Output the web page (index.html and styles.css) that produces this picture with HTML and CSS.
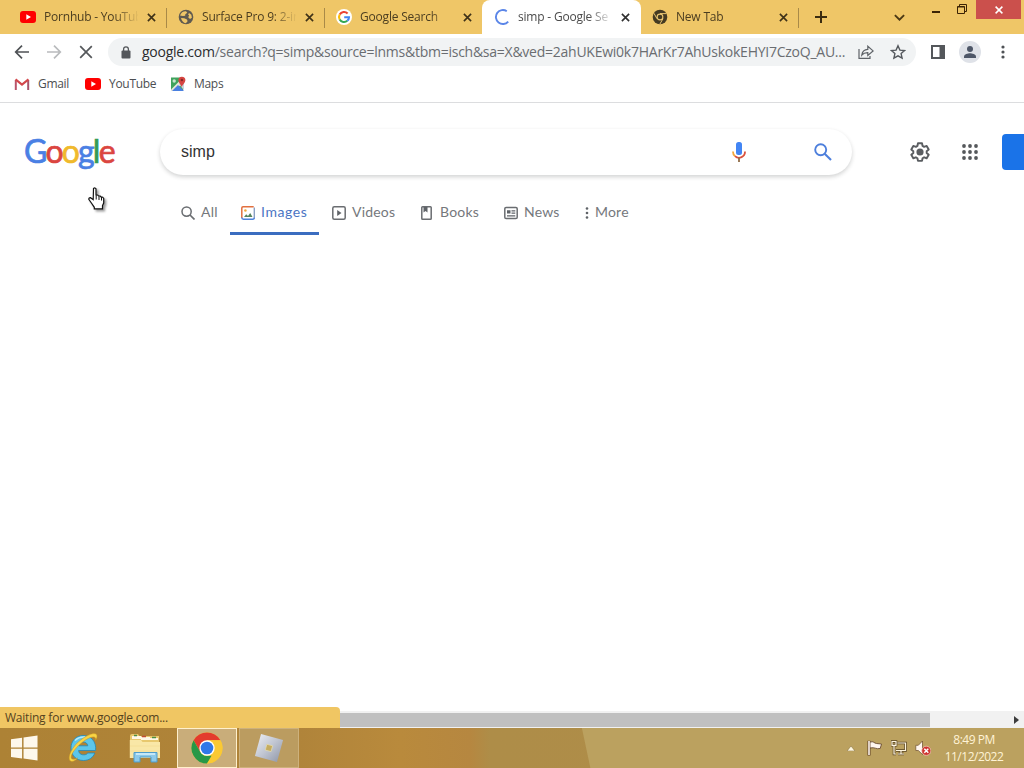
FILE: index.html
```
<!DOCTYPE html>
<html lang="en">
<head>
    <meta charset="UTF-8">
    <meta name="viewport" content="width=device-width, initial-scale=1.0">
    <title>simp - Google Search</title>
    <link rel="stylesheet" href="styles.css">
</head>
<body>
    <svg class="defs" aria-hidden="true">
        <symbol id="i-close" viewBox="0 0 10 10"><path d="M1 1l8 8M9 1l-8 8" fill="none" stroke="currentColor" stroke-width="1.8"/></symbol>
        <symbol id="i-youtube" viewBox="0 0 16 12"><rect width="16" height="12" rx="3" fill="#f00"/><path d="M6.3 3.3v5.4L11 6z" fill="#fff"/></symbol>
    </svg>

    <div class="tab-strip">
        <div class="tab">
            <svg class="favicon" viewBox="0 0 16 16"><use href="#i-youtube" y="2" width="16" height="12"/></svg>
            <span class="tab-title">Pornhub - YouTub</span>
            <svg class="tab-close"><use href="#i-close"/></svg>
        </div>
        <div class="tab">
            <svg class="favicon" viewBox="0 0 16 16"><circle cx="8" cy="8" r="7.3" fill="#5f5a50"/><path d="M2 6.5C3 3.5 5.500 2 8 2.200L9.300 3.700 7.300 5.200 7.200 6.800 5 7zM3 9l3.200.2 2.800 1.300.6 1.800L7.800 14.300C5.500 13.800 3.600 12 3 9zM11 4l2.300 1.800.6 3-1.900 1.100-1.800-1.600.9-1.700-1-1.200z" fill="#efc667"/></svg>
            <span class="tab-title">Surface Pro 9: 2-in</span>
            <svg class="tab-close"><use href="#i-close"/></svg>
        </div>
        <div class="tab no-line">
            <svg class="favicon" viewBox="0 0 16 16"><circle cx="8" cy="8" r="8" fill="#fff"/><g fill="none" stroke-width="2.1"><path d="M11.6 4.4A5 5 0 0 0 3.7 5.5" stroke="#ea4335"/><path d="M3.7 5.5a5 5 0 0 0 0 5" stroke="#fbbc05"/><path d="M3.7 10.5a5 5 0 0 0 7.600 1.3" stroke="#34a853"/><path d="M11.3 11.8A5 5 0 0 0 13 8.2H8.2" stroke="#4285f4"/></g></svg>
            <span class="tab-title">Google Search</span>
            <svg class="tab-close"><use href="#i-close"/></svg>
        </div>
        <div class="tab active no-line">
            <svg class="favicon" viewBox="0 0 16 16"><path d="M14.200 12.600A7 7 0 1 1 12.800 2.200" fill="none" stroke="#5b86e8" stroke-width="1.900"/></svg>
            <span class="tab-title">simp - Google Se</span>
            <svg class="tab-close"><use href="#i-close"/></svg>
        </div>
        <div class="tab">
            <svg class="favicon" viewBox="0 0 16 16"><circle cx="8" cy="8" r="7.300" fill="#443a22"/><circle cx="8" cy="8" r="3.400" fill="#e9c571"/><circle cx="8" cy="8" r="2.300" fill="#443a22"/><path d="M8 4.600h6.400M5 9.700L1.900 4.200M11 9.700l-3.200 5.500" stroke="#e9c571" stroke-width="1"/></svg>
            <span class="tab-title">New Tab</span>
            <svg class="tab-close"><use href="#i-close"/></svg>
        </div>
        <svg class="new-tab" viewBox="0 0 12 12"><path d="M6 0v12M0 6h12" stroke="#3b2c10" stroke-width="2"/></svg>
        <svg class="tab-search" viewBox="0 0 10 6"><path d="M.8.8L5 5 9.200.8" fill="none" stroke="#4b3915" stroke-width="1.700"/></svg>
        <div class="window-buttons">
            <svg class="win-min" viewBox="0 0 8 2"><path d="M0 1h8" stroke="#3b2305" stroke-width="2"/></svg>
            <svg class="win-max" viewBox="0 0 10 10"><path d="M.5 2.500h7v7h-7zM2.500 2.500v-2h7v7h-2" fill="none" stroke="#3b2305" stroke-width="1"/><path d="M.5 3h7" stroke="#3b2305"/></svg>
            <span class="win-close"><svg viewBox="0 0 8 8"><path d="M.6.6l6.800 6.800M7.400.6L.6 7.400" stroke="#fff" stroke-width="1.500"/></svg></span>
        </div>
    </div>

    <div class="toolbar">
        <svg class="nav" viewBox="0 0 16 16"><path d="M15 8H2M8 1.700L1.700 8 8 14.300" fill="none" stroke="#4f5256" stroke-width="1.700"/></svg>
        <svg class="nav" viewBox="0 0 16 16"><path d="M1 8h13M8 1.700L14.300 8 8 14.300" fill="none" stroke="#b9bbbd" stroke-width="1.700"/></svg>
        <svg class="nav" viewBox="0 0 16 16"><path d="M2.200 2.200l11.600 11.600M13.800 2.200L2.200 13.800" fill="none" stroke="#55585b" stroke-width="1.700"/></svg>
        <div class="omnibox">
            <svg class="lock" viewBox="0 0 10 13"><rect x=".5" y="4.500" width="9" height="8" rx="1" fill="#54575b"/><path d="M2.600 5V3.200a2.400 2.400 0 0 1 4.800 0V5" fill="none" stroke="#54575b" stroke-width="1.300"/></svg>
            <span class="url"><b>google.com</b>/search?q=simp&amp;source=lnms&amp;tbm=isch&amp;sa=X&amp;ved=2ahUKEwi0k7HArKr7AhUskokEHYI7CzoQ_AU...</span>
            <svg class="share" viewBox="0 0 16 14"><path d="M1 4v9.300h11V11" fill="none" stroke="#5f6368" stroke-width="1.200"/><path d="M3.800 10c.5-3.700 2.600-5.600 6-5.700V1.200l5.300 4.700-5.300 4.600V7.600C7.300 7.500 5.300 8.300 3.800 10z" fill="none" stroke="#5f6368" stroke-width="1.200"/></svg>
            <svg class="star" viewBox="0 0 16 16"><path d="M8 1.800l1.900 4.300 4.700.4-3.500 3.100 1 4.600L8 11.800l-4.100 2.400 1-4.600L1.400 6.500l4.700-.4z" fill="none" stroke="#54585d" stroke-width="1.400"/></svg>
        </div>
        <svg class="panel" viewBox="0 0 14 14"><path d="M1 1h12v12H1z" fill="none" stroke="#54575b" stroke-width="2"/><path d="M8.500 1H13v12H8.500z" fill="#54575b"/></svg>
        <svg class="avatar" viewBox="0 0 22 22"><circle cx="11" cy="11" r="11" fill="#dfe2e8"/><circle cx="11" cy="7.900" r="3" fill="#4e5768"/><path d="M5 17v-1.600c0-2.200 4-3.200 6-3.200s6 1 6 3.200V17z" fill="#4e5768"/></svg>
        <svg class="menu" viewBox="0 0 4 14"><g fill="#4f5256"><circle cx="2" cy="2" r="1.600"/><circle cx="2" cy="7" r="1.600"/><circle cx="2" cy="12" r="1.600"/></g></svg>
    </div>

    <div class="bookmarks">
        <div class="bookmark b1">
            <svg viewBox="0 0 16 16"><path d="M1.800 14V4" stroke="#b9546a" stroke-width="2"/><path d="M14.200 14V4" stroke="#a8526a" stroke-width="2"/><path d="M1.500 3.400L8 8.500l6.500-5.100" fill="none" stroke="#d3474b" stroke-width="2.200"/></svg>
            <span>Gmail</span>
        </div>
        <div class="bookmark b2">
            <svg viewBox="0 0 16 16"><use href="#i-youtube" y="2" width="16" height="12"/></svg>
            <span>YouTube</span>
        </div>
        <div class="bookmark b3">
            <svg viewBox="0 0 16 16"><path d="M1 1.500h12v13H1z" fill="#3fa35c"/><path d="M1 13.500L12 2.500v5L4.500 15H1z" fill="#e8e6d8"/><path d="M2 15L8 9l6 6z" fill="#4a80e0"/><path d="M9 8l5-1v7.500z" fill="#c9d3dc"/><circle cx="4.200" cy="5" r="1.700" fill="#c9e6cf"/><path d="M11.700 11C11 8.500 8.400 6.800 8.400 4.200a3.500 3.500 0 0 1 7 0c0 2.600-3 4.300-3.700 6.800z" fill="#d64541"/><circle cx="11.900" cy="4" r="1.200" fill="#842a28"/></svg>
            <span>Maps</span>
        </div>
    </div>

    <main class="page">
        <header class="search-header">
            <div class="logo"><span class="blue">G</span><span class="red">o</span><span class="yellow">o</span><span class="blue">g</span><span class="green">l</span><span class="red">e</span></div>
            <div class="search-box">
                <span class="query">simp</span>
                <svg class="mic" viewBox="0 0 14 20"><rect x="4" y="0" width="6" height="13" rx="2.500" fill="#4285f4"/><path d="M1 9.500a6 6 0 0 0 2 4.700" fill="none" stroke="#f2a73b" stroke-width="1.800"/><path d="M3 14.200a6 6 0 0 0 10-4.700" fill="none" stroke="#d9523f" stroke-width="1.800"/><path d="M7 15.500V20" stroke="#8f6b45" stroke-width="1.800"/></svg>
                <svg class="lens" viewBox="0 0 18 18"><circle cx="6.700" cy="6.700" r="5.500" fill="none" stroke="#4d7fdc" stroke-width="1.900"/><path d="M10.700 10.700l6.300 6.300" stroke="#4d7fdc" stroke-width="2.100"/></svg>
            </div>
            <svg class="gear" viewBox="0 0 24 24"><path d="M9.800 2.500h4.400l.6 2.900 1.700 1 2.800-1 2.200 3.800-2.200 1.900v2l2.200 1.900-2.200 3.800-2.800-1-1.700 1-.6 2.900H9.800l-.6-2.900-1.700-1-2.800 1L2.500 15l2.200-1.900v-2L2.500 9.200l2.200-3.800 2.800 1 1.700-1z" fill="none" stroke="#5a5d61" stroke-width="2.100" stroke-linejoin="round"/><circle cx="12" cy="12" r="3.900" fill="#5a5d61"/></svg>
            <svg class="apps" viewBox="0 0 16 16"><g fill="#55585b"><circle cx="2" cy="2" r="1.900"/><circle cx="8" cy="2" r="1.900"/><circle cx="14" cy="2" r="1.900"/><circle cx="2" cy="8" r="1.900"/><circle cx="8" cy="8" r="1.900"/><circle cx="14" cy="8" r="1.900"/><circle cx="2" cy="14" r="1.900"/><circle cx="8" cy="14" r="1.900"/><circle cx="14" cy="14" r="1.900"/></g></svg>
            <div class="sign-in"></div>
        </header>

        <nav class="filters">
            <a class="filter f-all"><svg viewBox="0 0 14 14"><circle cx="5.600" cy="5.600" r="4.600" fill="none" stroke="#6a6d71" stroke-width="1.500"/><path d="M9 9l4.500 4.500" stroke="#6a6d71" stroke-width="1.700"/></svg><span>All</span></a>
            <a class="filter f-images"><svg viewBox="0 0 14 14"><path d="M13.300 1.500v11" stroke="#8ba0c4" stroke-width="1.400"/><path d="M12.700.8H2Q.8.8.8 2v10" fill="none" stroke="#e2703f" stroke-width="1.500"/><path d="M.8 11.500q0 1.700 1.700 1.700h9.300q1.500 0 1.500-1.500" fill="none" stroke="#4e82db" stroke-width="1.500"/><circle cx="4.400" cy="4.500" r="1.300" fill="#f0a83c"/><path d="M3 11l2.200-2.700L7 10l2.200-3 2.300 4z" fill="#56845e"/></svg><span>Images</span></a>
            <a class="filter f-videos"><svg viewBox="0 0 14 14"><rect x=".8" y=".8" width="12.400" height="12.400" rx="1.500" fill="none" stroke="#6a6d71" stroke-width="1.500"/><path d="M5.200 4v6l4.300-3z" fill="#5f6368"/></svg><span>Videos</span></a>
            <a class="filter f-books"><svg viewBox="0 0 14 14"><rect x="1.800" y=".8" width="9.400" height="12.400" rx=".8" fill="none" stroke="#6a6d71" stroke-width="1.500"/><path d="M3.500 1h4v5.500l-2-1.500-2 1.500z" fill="#5f6368"/></svg><span>Books</span></a>
            <a class="filter f-news"><svg viewBox="0 0 14 14"><rect x=".8" y="1.500" width="12.400" height="11" rx="1.300" fill="none" stroke="#6a6d71" stroke-width="1.500"/><path d="M3 4.200h3.500v3.300H3zM7.500 4.200h3.800v1.200H7.500zM7.500 6.600h3.800v1.200H7.500zM3 9.200h8.300v1.200H3z" fill="#5f6368"/></svg><span>News</span></a>
            <a class="filter f-more"><svg viewBox="0 0 4 14"><g fill="#5f6368"><circle cx="2" cy="2.500" r="1.300"/><circle cx="2" cy="7" r="1.300"/><circle cx="2" cy="11.500" r="1.300"/></g></svg><span>More</span></a>
        </nav>

        <svg class="cursor" viewBox="0 0 18 24"><path d="M5.500 1.500q1.500-1.200 2.500.3v6l1.700.2.700.8 1.800.2.800.9 1.700.3 1 1.200V16l-1.200 2.600v3.200H6.300v-1.500L3.400 16 .8 12.300q0-1.800 1.700-1.600l2.700 2z" fill="#fff" stroke="#111" stroke-width="1.200"/><path d="M8.200 8v4.500M11 9v4M13.500 10v3.500" stroke="#111" stroke-width="1"/></svg>
    </main>

    <div class="scrollbar">
        <div class="thumb"></div>
        <svg class="arrow" viewBox="0 0 5 8"><path d="M0 0v8l5-4z" fill="#3c3c3c"/></svg>
        <div class="status"><span>Waiting for www.google.com...</span></div>
    </div>

    <footer class="taskbar">
        <svg class="start" viewBox="0 0 28 26"><path d="M0 4l11.500-1.700V12.500H0zM13 2.100L27.500 0v12.500H13zM0 13.800h11.500V24L0 22.300zM13 13.800h14.500V26L13 24z" fill="#fdf8ec"/></svg>
        <div class="task">
            <svg viewBox="0 0 32 32">
                <path d="M16 3.500C9 3.500 4 9 4 16s5 12.500 12.500 12.500c5.500 0 9.700-3 11.300-7.500h-7c-2 3-9 2.500-9.200-2.500h17C29.500 9.500 24 3.500 16 3.500zm-4.300 10.300c.7-5 8.600-5 9.100 0z" fill="#5cc6ea" stroke="#2388b8" stroke-width=".8"/>
                <path d="M8 8.500Q12 4.500 18 5" fill="none" stroke="#b4eafb" stroke-width="1.500"/>
                <path d="M4.800 29.500C-1.500 29 4 14.500 15 7 22 2 29.500-.5 30 3.800c.2 1.800-.8 3.700-1.400 4.600 1-4.500-3.600-4.500-10.400-.2C9.500 13.800 2.500 23.500 4.500 26.400c1.100 1.600 4.200.5 6-.5-1.500 2-3.700 3.600-5.700 3.600z" fill="#f9d544" stroke="#c79321" stroke-width=".5"/>
            </svg>
        </div>
        <div class="task">
            <svg viewBox="0 0 32 32">
                <path d="M1 4q0-2 2-2h6l1.500 2H30v21H1z" fill="#e8c86e"/>
                <path d="M3 4h9v3H3zM12 5h9v3h-9zM21 6h8v2h-8z" fill="#fff8e6"/>
                <path d="M5 3.500h3M23 5.500h4" stroke="#4a8c45" stroke-width="1.500"/><path d="M13 4.500h4" stroke="#c34c35" stroke-width="1.500"/>
                <path d="M.8 8H12l1.500 2H31v16H.8z" fill="#f9e7a7"/><path d="M1 14h30M1 19h30" stroke="#f5df98"/>
                <path d="M5 30V20.500h23V30h-6v-5H11v5z" fill="#8dcaea" stroke="#4f9dcb"/><path d="M7 22h19" stroke="#d9f2fd" stroke-width="1.500"/>
            </svg>
        </div>
        <div class="task current">
            <svg viewBox="0 0 32 32">
                <circle cx="16" cy="16" r="15.500" fill="#fcc934"/>
                <path d="M2.600 8.200A15.500 15.500 0 0 1 29.400 8.200H16L9.300 19.900z" fill="#e33b2e"/>
                <path d="M2.600 8.200L9.300 19.900Q12 24 16 23.800h6.800L16 31.500A15.500 15.500 0 0 1 2.600 8.200z" fill="#279847"/>
                <path d="M22.700 19.900L16 31.500h1A15.500 15.500 0 0 0 29.400 8.200H16z" fill="#fac934"/>
                <circle cx="16" cy="16" r="7.700" fill="#fff"/><circle cx="16" cy="16" r="6.300" fill="#2f78e8"/>
            </svg>
        </div>
        <div class="task open">
            <svg viewBox="0 0 32 32">
                <defs><linearGradient id="steel" x1="0" y1="0" x2="1" y2="1"><stop offset="0" stop-color="#eef0f5"/><stop offset=".5" stop-color="#c0c5d1"/><stop offset="1" stop-color="#8b93a5"/></linearGradient></defs>
                <path d="M7.500 1l23.500 6.500L24.500 31 1 24.500z" fill="url(#steel)"/>
                <path d="M13.700 12l6.200 1.600-1.700 6.200-6.200-1.600z" fill="#c5ac5f" stroke="#e6dcb2" stroke-width=".8"/>
            </svg>
        </div>
        <div class="tray">
            <svg class="tray-up" viewBox="0 0 8 5"><path d="M4 0l4 5H0z" fill="#fff8e2" stroke="#7b6536" stroke-width=".5"/></svg>
            <svg viewBox="0 0 16 16"><path d="M2 .8V15.500" stroke="#5d3e26" stroke-width="3"/><path d="M3 2c4-1 4 1.300 6.500 1.500L14.500 4l-1.300 4.500C9 9.500 8 6.800 3 8z" fill="#fff6ef" stroke="#5d3e26" stroke-width=".8"/><path d="M2 1v14" stroke="#fff6ef" stroke-width="1.600"/></svg>
            <svg viewBox="0 0 16 16"><g fill="none"><path d="M6.500 3h8v7.500H5M10 10.500V14M7 14h6M3 6v8h2M1 1.500h4v3.800H1z" stroke="#5a4623" stroke-width="2.600"/><path d="M6.500 3h8v7.500H5M10 10.500V14M7 14h6M3 6v8h2M1 1.500h4v3.800H1z" stroke="#fff6df" stroke-width="1.200"/></g></svg>
            <svg viewBox="0 0 16 16"><path d="M.8 5.300h2.500L7.500 1v13.500L3.300 10.500H.8z" fill="#fff6ef" stroke="#6b4e2b" stroke-width=".7"/><circle cx="11.300" cy="10.800" r="4.600" fill="#cf3430" stroke="#f4cfc0" stroke-width=".7"/><path d="M9.300 8.800l4 4M13.300 8.800l-4 4" stroke="#fff" stroke-width="1.500"/></svg>
            <div class="clock"><span class="time">8:49 PM</span><span class="date">11/12/2022</span></div>
        </div>
    </footer>
</body>
</html>
```
FILE: styles.css
```
* {
    box-sizing: border-box;
}

body {
    width: 1024px;
    height: 768px;
    margin: 0;
    display: flex;
    flex-direction: column;
    overflow: hidden;
    background-color: #fff;
    font-family: "Open Sans", "Noto Sans", sans-serif;
    font-size: 12px;
    white-space: nowrap;
}

svg {
    display: block;
    flex: none;
}

.defs {
    position: absolute;
    width: 0;
    height: 0;
}

/* tabs */
.tab-strip {
    flex: none;
    display: flex;
    align-items: center;
    height: 34px;
    padding-left: 8px;
    background-color: #efc667;
    color: #4b3d20;
}

.tab {
    position: relative;
    flex: none;
    display: flex;
    align-items: center;
    width: 158px;
    height: 34px;
    padding: 0 10px 0 12px;
}

.tab::after {
    content: "";
    width: 1px;
    height: 20px;
    position: absolute;
    right: -1px;
    top: 8px;
    background-color: #a98a48;
}

.tab.no-line::after {
    display: none;
}

.tab.active {
    width: 159px;
    margin-right: -1px;
    background-color: #fff;
    border-radius: 8px 8px 0 0;
    color: #4a4a4a;
}

.favicon {
    width: 16px;
    height: 16px;
}

.tab-title {
    width: 94px;
    margin-left: 8px;
    line-height: 20px;
    letter-spacing: -0.2px;
    -webkit-mask-image: linear-gradient(to right, #000 70px, transparent 95px);
    mask-image: linear-gradient(to right, #000 70px, transparent 95px);
}

.tab-close {
    width: 9px;
    height: 9px;
    margin-left: 8.5px;
    color: #3f3218;
}

.active .tab-close {
    color: #303030;
}

.new-tab {
    width: 12px;
    height: 12px;
    margin-left: 17px;
}

.tab-search {
    width: 11px;
    height: 7px;
    margin-left: 67px;
}

.window-buttons {
    display: flex;
    align-self: flex-start;
    margin-left: 27px;
}

.win-min {
    width: 8px;
    height: 2px;
    margin-top: 11px;
}

.win-max {
    width: 10px;
    height: 10px;
    margin: 4px 9px 0 17px;
}

.win-close {
    display: flex;
    align-items: center;
    justify-content: center;
    width: 45px;
    height: 19px;
    background-color: #cb504c;
}

.win-close svg {
    width: 8px;
    height: 8px;
}

/* toolbar */
.toolbar {
    flex: none;
    display: flex;
    align-items: center;
    height: 36px;
    padding-left: 14px;
}

.nav {
    width: 16px;
    height: 16px;
    margin-right: 16px;
}

.omnibox {
    display: flex;
    align-items: center;
    width: 808px;
    height: 28px;
    margin-left: -2px;
    padding-left: 13px;
    border-radius: 14px;
    background-color: #f1f3f4;
}

.lock {
    width: 10px;
    height: 13px;
}

.url {
    width: 706px;
    margin-left: 11px;
    font-size: 14px;
    line-height: 22px;
    letter-spacing: -0.25px;
    color: #6a6d71;
}

.url b {
    font-weight: 400;
    color: #2a2c2e;
}

.share {
    width: 16px;
    height: 14px;
    margin-left: 10px;
}

.star {
    width: 16px;
    height: 16px;
    margin-left: 16px;
}

.panel {
    width: 14px;
    height: 14px;
    margin-left: 15px;
}

.avatar {
    width: 22px;
    height: 22px;
    margin-left: 14px;
}

.menu {
    width: 4px;
    height: 14px;
    margin-left: 20px;
}

/* bookmarks */
.bookmarks {
    flex: none;
    display: flex;
    height: 33px;
    padding: 6px 0 0 14px;
    border-bottom: 1px solid #dcdddf;
    color: #4c4e51;
    letter-spacing: -0.3px;
}

.bookmark {
    display: flex;
    align-items: center;
    height: 16px;
    line-height: 14px;
}

.bookmark svg {
    width: 16px;
    height: 16px;
    margin-right: 8px;
}

.b1 {
    width: 71px;
}

.b2 {
    width: 85px;
}

/* page */
.page {
    flex: 1;
    position: relative;
    min-height: 0;
}

.search-header {
    display: flex;
    align-items: center;
    height: 98px;
    padding-left: 24px;
}

.logo {
    width: 136px;
    margin-top: -3px;
    font-family: Lato, sans-serif;
    font-size: 32px;
    line-height: 40px;
    letter-spacing: -1.8px;
    -webkit-text-stroke: 0.7px currentColor;
}

.blue {
    color: #4a80e4;
}

.red {
    color: #db4540;
}

.yellow {
    color: #f0b92c;
}

.green {
    color: #369a55;
}

.search-box {
    display: flex;
    align-items: center;
    width: 692px;
    height: 46px;
    padding-left: 21px;
    border-radius: 23px;
    box-shadow: 0 2px 4px rgba(32, 33, 36, 0.2);
}

.query {
    width: 551px;
    font-family: "Liberation Sans", Arial, sans-serif;
    font-size: 16px;
    color: #333;
}

.mic {
    width: 14px;
    height: 20px;
}

.lens {
    width: 18px;
    height: 18px;
    margin-left: 68px;
}

.gear {
    width: 22px;
    height: 22px;
    margin-left: 57px;
}

.apps {
    width: 16px;
    height: 16px;
    margin-left: 31px;
}

.sign-in {
    width: 22px;
    height: 36px;
    margin-left: 24px;
    border-radius: 4px 0 0 4px;
    background-color: #1a73e8;
}

.filters {
    display: flex;
    height: 34px;
    padding-left: 171px;
    font-family: Lato, sans-serif;
    font-size: 14px;
    line-height: 20px;
    letter-spacing: 0.2px;
    color: #75787c;
}

.filter {
    display: flex;
    height: 34px;
    padding: 0 0 11px 10px;
    align-items: center;
}

.filter svg {
    width: 14px;
    height: 14px;
    margin-right: 6px;
}

.filter span {
    margin-top: -1px;
}

.f-all {
    width: 59px;
}

.f-images {
    width: 89px;
    padding-left: 11px;
    padding-bottom: 8px;
    border-bottom: 3px solid #3b6dc0;
    color: #4a75c4;
    letter-spacing: 0.6px;
}

.f-videos {
    width: 89px;
    padding-left: 13px;
}

.f-books {
    width: 86px;
    padding-left: 12px;
}

.f-news {
    width: 80px;
}

.f-more {
    padding-left: 11px;
}

.f-more svg {
    width: 4px;
}

.cursor {
    position: absolute;
    left: 88px;
    top: 84px;
    width: 18px;
    height: 24px;
    filter: drop-shadow(2px 2px 1px rgba(0, 0, 0, 0.4));
}

/* bottom of the window */
.scrollbar {
    flex: none;
    position: relative;
    display: flex;
    align-items: center;
    height: 17px;
    background-color: #f1f1f1;
}

.thumb {
    width: 930px;
    height: 14px;
    background-color: #c0c0c0;
}

.arrow {
    width: 5px;
    height: 8px;
    margin-left: 84px;
}

.status {
    position: absolute;
    left: 0;
    bottom: 0;
    width: 340px;
    height: 21px;
    padding-left: 5px;
    border-radius: 0 4px 0 0;
    background-color: #f0c663;
    color: #54431f;
    line-height: 22px;
    letter-spacing: -0.22px;
}

/* taskbar */
.taskbar {
    flex: none;
    display: flex;
    align-items: center;
    height: 40px;
    padding-left: 11px;
    background: linear-gradient(78deg, transparent 577px, #bba15f 578px),
        linear-gradient(to right, #ad8235 0, #b0843a 300px, #b98a3c 400px, #b68740 470px, #ae8d48 490px, #b08c49 100%);
}

.start {
    width: 27px;
    height: 26px;
    margin-right: 15px;
}

.task {
    display: flex;
    align-items: center;
    justify-content: center;
    width: 60px;
    height: 40px;
    margin-right: 2px;
}

.task svg {
    width: 32px;
    height: 32px;
}

.current {
    border: 1px solid #fff0cd;
    background-color: #c9ad7a;
}

.open {
    border: 1px solid #cdb17c;
    background-color: #bb9c60;
}

.open svg {
    width: 30px;
    height: 30px;
}

.tray {
    display: flex;
    align-items: center;
    gap: 8px;
    margin-left: auto;
    color: #fff3d6;
}

.tray svg {
    width: 16px;
    height: 16px;
}

.tray .tray-up {
    width: 8px;
    height: 5px;
    margin-right: 4px;
}

.clock {
    display: flex;
    flex-direction: column;
    align-items: center;
    width: 100px;
    margin-left: -15px;
    line-height: 17px;
    letter-spacing: -0.5px;
}
```
